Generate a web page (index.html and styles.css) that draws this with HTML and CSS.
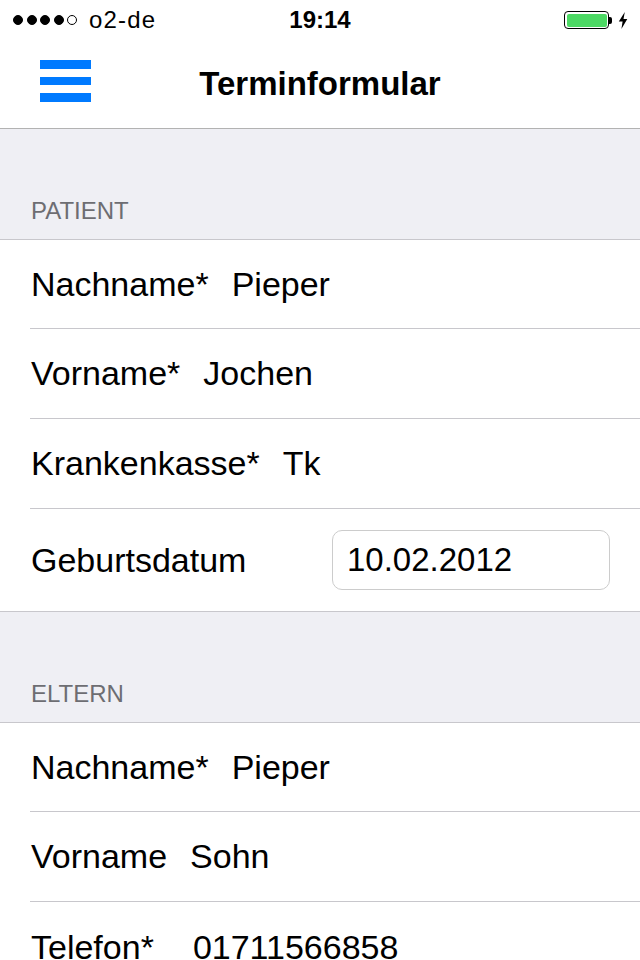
FILE: index.html
```html
<!DOCTYPE html>
<html lang="de">
<head>
<meta charset="utf-8">
<title>Terminformular</title>
<link rel="stylesheet" href="styles.css">
</head>
<body>
<div class="screen">
  <div class="statusbar">
    <div class="sb-left">
      <span class="dots"><i class="dot"></i><i class="dot"></i><i class="dot"></i><i class="dot"></i><i class="dot dot-empty"></i></span>
      <span class="carrier">o2-de</span>
    </div>
    <div class="sb-time">19:14</div>
    <div class="sb-right">
      <span class="battery"><span class="battery-fill"></span></span><span class="battery-cap"></span>
      <svg class="bolt" width="10" height="17" viewBox="0 0 10 17"><path d="M6.8 0 L0.8 9.6 L4.6 9.6 L3.4 17 L9.3 7 L5.5 7 Z" fill="#000"/></svg>
    </div>
  </div>
  <div class="navbar">
    <div class="menu-btn"><span></span><span></span><span></span></div>
    <div class="nav-title">Terminformular</div>
  </div>

  <div class="section-head">PATIENT</div>
  <div class="group">
    <div class="row"><span class="label">Nachname*</span><span class="value">Pieper</span></div>
    <div class="row"><span class="label">Vorname*</span><span class="value">Jochen</span></div>
    <div class="row"><span class="label">Krankenkasse*</span><span class="value">Tk</span></div>
    <div class="row row-date"><span class="label">Geburtsdatum</span><span class="datebox">10.02.2012</span></div>
  </div>

  <div class="section-head">ELTERN</div>
  <div class="group">
    <div class="row"><span class="label">Nachname*</span><span class="value">Pieper</span></div>
    <div class="row"><span class="label">Vorname</span><span class="value">Sohn</span></div>
    <div class="row"><span class="label">Telefon*</span><span class="value value-wide">01711566858</span></div>
  </div>
</div>
</body>
</html>
```

FILE: styles.css
```css
* { box-sizing: border-box; }
html, body { margin: 0; padding: 0; }
body {
  width: 640px;
  height: 960px;
  overflow: hidden;
  background: #efeff4;
  font-family: "Liberation Sans", Arial, sans-serif;
  color: #000;
}
.screen { width: 640px; }

.statusbar {
  height: 40px;
  background: #fff;
  display: flex;
  align-items: center;
  justify-content: space-between;
  padding: 0 12px 0 13px;
  position: relative;
}
.sb-left { display: flex; align-items: center; gap: 12px; }
.dots { display: flex; gap: 3.5px; }
.dot {
  display: block;
  width: 10px; height: 10px;
  border-radius: 50%;
  background: #000;
  border: 1px solid #000;
}
.dot-empty { background: transparent; }
.carrier { font-size: 24px; letter-spacing: 1.2px; }
.sb-time {
  position: absolute;
  left: 0; right: 0;
  text-align: center;
  font-weight: bold;
  font-size: 24px;
  pointer-events: none;
}
.sb-right { display: flex; align-items: center; }
.battery {
  width: 45px; height: 18px;
  border: 1.5px solid #000;
  border-radius: 4px;
  padding: 1.5px;
  display: inline-block;
}
.battery-fill { display: block; width: 100%; height: 100%; background: #4cd964; border-radius: 2px; }
.battery-cap { width: 3px; height: 7px; background: #000; border-radius: 0 2px 2px 0; margin-right: 6px; }
.bolt { display: block; }

.navbar {
  height: 89px;
  background: #fff;
  border-bottom: 1px solid #b2b2b2;
  display: flex;
  align-items: flex-start;
  position: relative;
}
.nav-title {
  position: absolute;
  left: 0; right: 0;
  top: 0; bottom: 0;
  display: flex;
  align-items: center;
  justify-content: center;
  font-size: 33px;
  font-weight: bold;
  pointer-events: none;
}
.menu-btn {
  margin: 20px 0 0 40px;
  width: 51px;
  display: flex;
  flex-direction: column;
  gap: 8px;
}
.menu-btn span { display: block; height: 8.5px; background: #007aff; }

.section-head {
  height: 111px;
  padding: 0 31px 14px;
  display: flex;
  align-items: flex-end;
  font-size: 24px;
  line-height: 28px;
  color: #6d6d72;
  border-bottom: 1px solid #c8c7cc;
}
.group {
  background: #fff;
  padding-left: 30px;
  border-bottom: 1px solid #c8c7cc;
}
.row {
  height: 90px;
  display: flex;
  align-items: center;
  gap: 23px;
  padding-left: 1px;
  font-size: 34px;
  border-bottom: 1px solid #c8c7cc;
}
.row:first-child { height: 89px; }
.row:last-child { border-bottom: none; }
.row-date { height: 102px; justify-content: space-between; padding-right: 30px; }
.value-wide { margin-left: 16px; }
.datebox {
  width: 278px;
  height: 60px;
  border: 1px solid #ccc;
  border-radius: 10px;
  display: flex;
  align-items: center;
  padding-left: 14px;
  font-size: 33px;
}
```
